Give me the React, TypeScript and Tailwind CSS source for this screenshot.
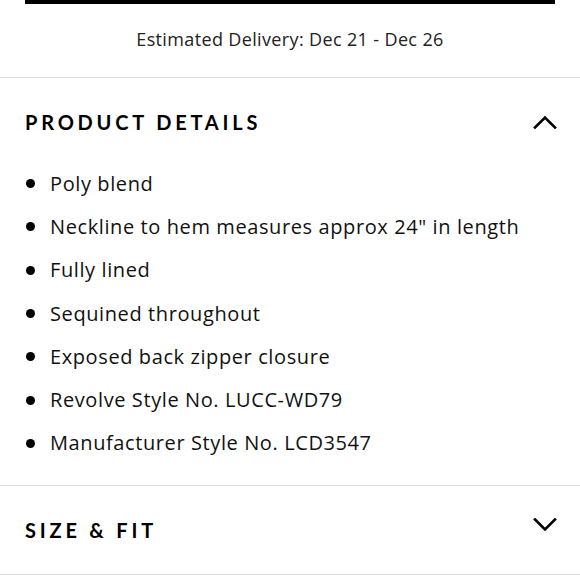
import React from 'react'

const details = [
  'Poly blend',
  'Neckline to hem measures approx 24" in length',
  'Fully lined',
  'Sequined throughout',
  'Exposed back zipper closure',
  'Revolve Style No. LUCC-WD79',
  'Manufacturer Style No. LCD3547',
]

function Chevron({ up }: { up?: boolean }) {
  return (
    <svg width="24" height="14" viewBox="0 0 24 14" fill="none">
      <path
        d={up ? 'M2 12.5 L12 2.5 L22 12.5' : 'M2 1.5 L12 11.5 L22 1.5'}
        stroke="#000"
        strokeWidth="2.6"
        strokeLinecap="square"
      />
    </svg>
  )
}

export default function App() {
  return (
    <div className="w-[580px] h-[580px] overflow-hidden bg-white text-black" style={{ fontFamily: '"Open Sans", Lato, sans-serif' }}>
      {/* Add to bag bar edge */}
      <div className="mx-[25px] h-[4px] bg-black" />

      {/* Delivery */}
      <div className="h-[74px] flex items-center justify-center border-b border-[#dcdcdc]">
        <p className="text-[18px] tracking-[0.02em] text-[#222] -mt-[2px]">Estimated Delivery: Dec 21 - Dec 26</p>
      </div>

      {/* Product details */}
      <div className="border-b border-[#dcdcdc] pb-[20px]">
        <div className="flex items-center justify-between pl-[25px] pr-[23px] h-[84px] pt-[4px]" style={{ fontFamily: 'Lato, sans-serif' }}>
          <h2 className="text-[20px] font-bold tracking-[0.19em] uppercase">Product Details</h2>
          <Chevron up />
        </div>
        <ul className="pl-[25px]">
          {details.map((d) => (
            <li key={d} className="flex items-center h-[43.3px] text-[20px] tracking-[0.03em] text-[#111]">
              <span className="w-[9px] h-[9px] rounded-full bg-black ml-[1px] mr-[15px]" />
              {d}
            </li>
          ))}
        </ul>
      </div>

      {/* Size & fit */}
      <div className="flex items-center justify-between pl-[25px] pr-[23px] h-[89px] border-b border-[#dcdcdc]" style={{ fontFamily: 'Lato, sans-serif' }}>
        <h2 className="text-[20px] font-bold tracking-[0.19em] uppercase">Size &amp; Fit</h2>
        <div className="-mt-[10px]">
          <Chevron />
        </div>
      </div>
    </div>
  )
}
